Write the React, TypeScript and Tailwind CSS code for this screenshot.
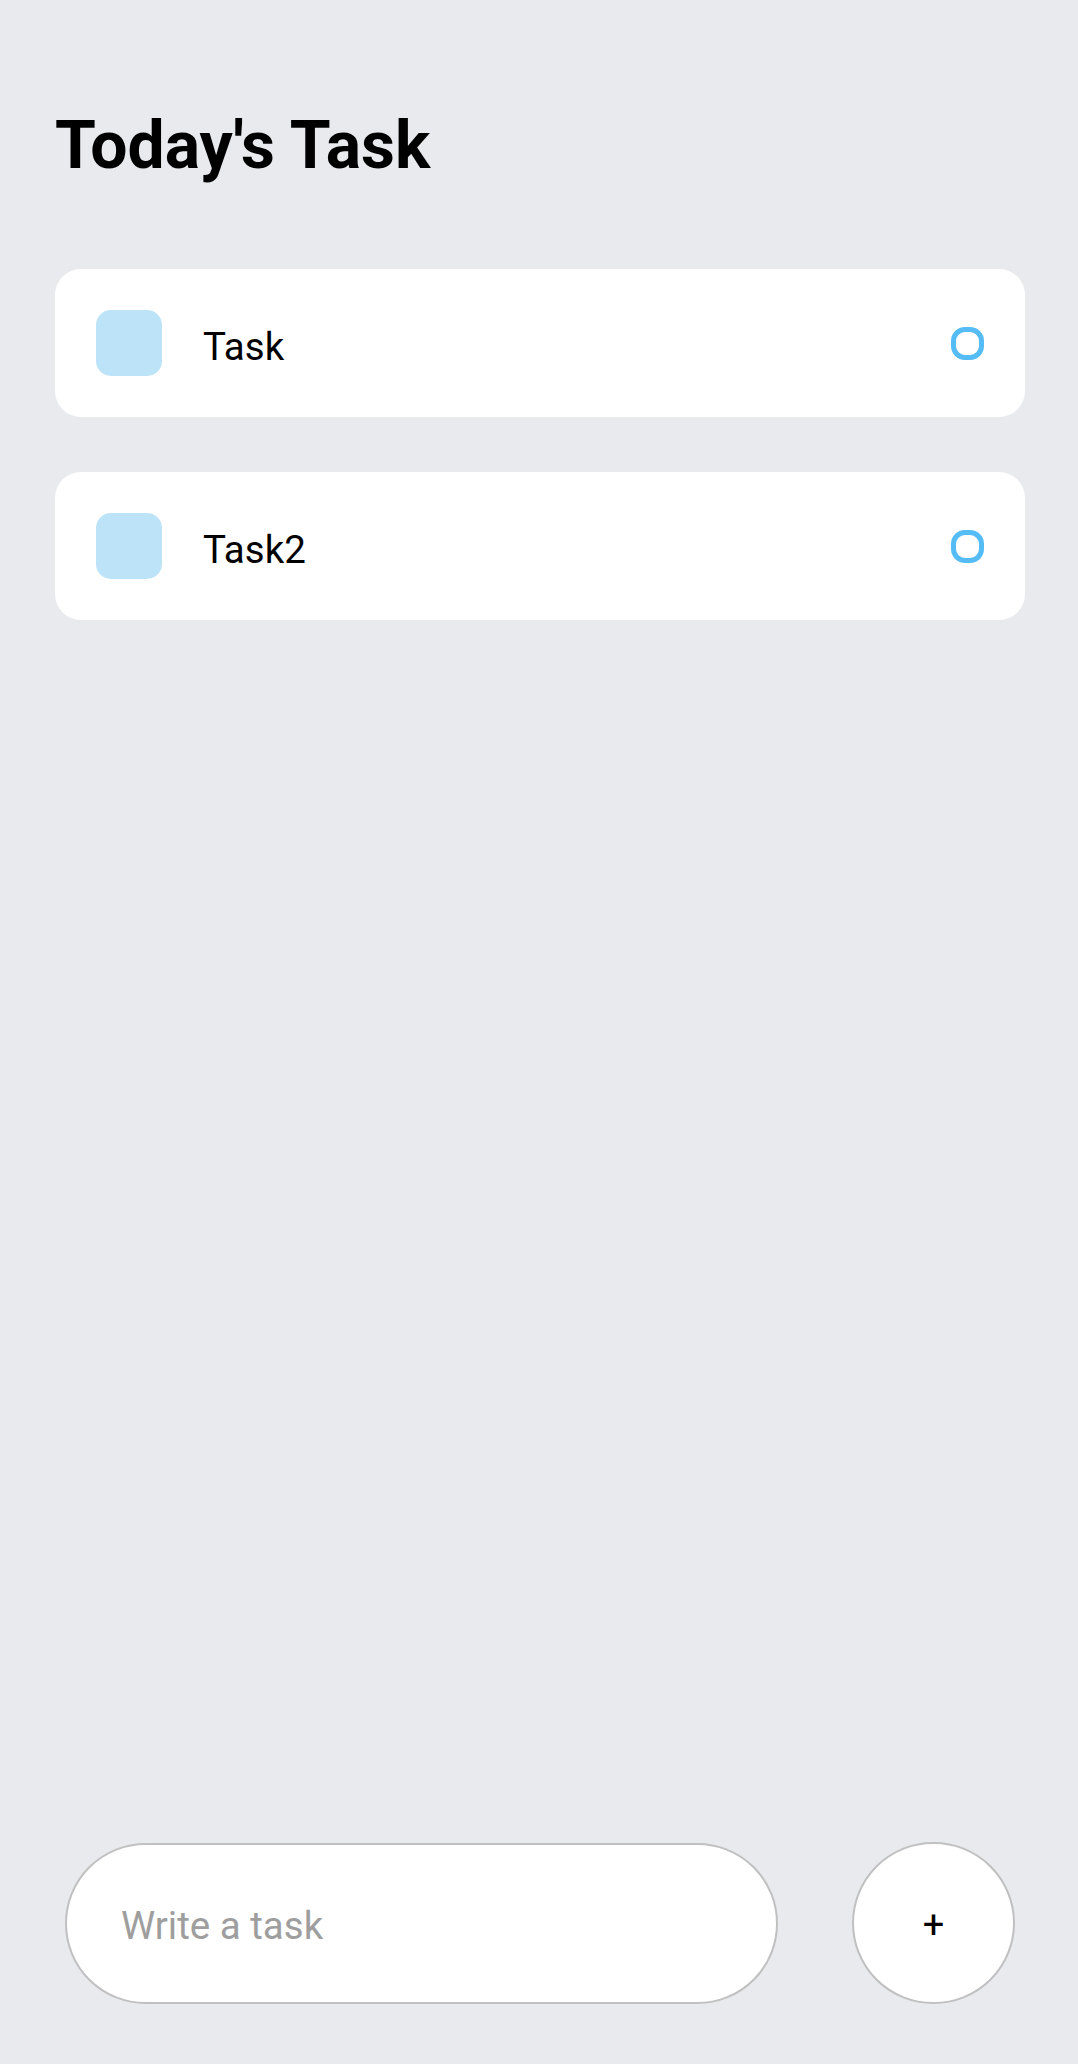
import React from "react";

const tasks = ["Task", "Task2"];

function TaskCard({ text }: { text: string }) {
  return (
    <div className="flex items-center justify-between bg-white rounded-[26px] px-[41px] py-[41px]">
      <div className="flex items-center">
        <div className="w-[66px] h-[66px] rounded-[15px] bg-[#bde3f8] mr-[41px]" />
        <span className="text-[38.5px] leading-[45px] pt-[6px] text-black">{text}</span>
      </div>
      <div className="w-[33px] h-[33px] rounded-[14px] border-[5.5px] border-[#55bcf6]" />
    </div>
  );
}

export default function App() {
  return (
    <div
      className="w-[1078px] h-[2064px] bg-[#e8eaed] flex flex-col"
      style={{ fontFamily: "Roboto, 'Noto Sans', sans-serif" }}
    >
      <div className="pl-[55px] pr-[53px] pt-[107px] flex-1">
        <h1 className="text-[66px] leading-[77px] font-bold text-black">Today's Task</h1>
        <div className="mt-[85px] flex flex-col gap-[55px]">
          {tasks.map((t) => (
            <TaskCard key={t} text={t} />
          ))}
        </div>
      </div>
      <div className="flex items-center pl-[65px] gap-[74px] pb-[60px]">
        <div className="w-[713px] h-[161px] shrink-0 rounded-full bg-white border-2 border-[#c0c0c0] flex items-center pl-[54px]">
          <span className="text-[38.5px] pt-[5px] text-[#9e9e9e]">Write a task</span>
        </div>
        <div className="w-[163px] h-[162px] shrink-0 rounded-full bg-white border-2 border-[#c0c0c0] flex items-center justify-center">
          <span className="text-[38px] pt-[4px] text-black">+</span>
        </div>
      </div>
    </div>
  );
}
